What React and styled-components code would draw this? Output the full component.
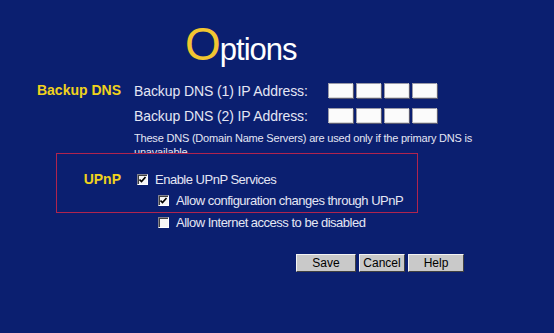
import React from "react";
import styled, { createGlobalStyle } from "styled-components";

const GlobalStyle = createGlobalStyle`
  html, body { margin: 0; padding: 0; background: #0b1f70; }
  body { font-family: "Liberation Sans", Arial, sans-serif; }
`;

const Page = styled.div`
  width: 554px;
  height: 333px;
  background: #0b1f70;
  color: #e4e6f4;
  overflow: hidden;
`;

const Title = styled.h1`
  margin: 0;
  padding: 21px 0 0 185px;
  height: 46px;
  display: flex;
  align-items: baseline;
  font-weight: normal;
  line-height: 46px;
`;

const BigLetter = styled.span`
  font-size: 46px;
  color: #f2c631;
  letter-spacing: -1px;
`;

const Rest = styled.span`
  font-size: 31px;
  line-height: 31px;
  color: #ffffff;
  letter-spacing: -1px;
`;

const Section = styled.section`
  display: grid;
  grid-template-columns: ${(p) => p.$labelWidth}px 1fr;
  column-gap: 13px;
  margin-top: ${(p) => p.$top || 0}px;
`;

const SectionLabel = styled.div`
  text-align: right;
  font-weight: bold;
  font-size: 14px;
  color: #f0d21c;
  line-height: ${(p) => p.$lh}px;
`;

const Rows = styled.div`
  display: flex;
  flex-direction: column;
`;

const IpRow = styled.div`
  display: flex;
  align-items: center;
  height: 25px;
`;

const FieldLabel = styled.span`
  width: 194px;
  font-size: 14px;
  letter-spacing: -0.1px;
`;

const Octets = styled.div`
  display: flex;
  gap: 3px;
`;

const Octet = styled.input`
  box-sizing: border-box;
  width: 25px;
  height: 15px;
  margin: 0;
  padding: 0;
  background: #fbfbfb;
  border: 1px solid;
  border-color: #9a9aa8 #e8e8e8 #d4d4d4 #9a9aa8;
  box-shadow: 1px 1px 0 #5a5a70;
`;

const Note = styled.p`
  margin: 3px 0 0;
  max-width: 340px;
  font-size: 11px;
  line-height: 14px;
  height: 22px;
  overflow: hidden;
  letter-spacing: -0.2px;
`;

const Highlight = styled.div`
  margin-left: 56px;
  width: 362px;
  box-sizing: border-box;
  border: 1px solid #b0244e;
  padding: 15px 0 1px;
`;

const CheckRow = styled.div`
  display: flex;
  align-items: center;
  height: 21px;
  margin-top: ${(p) => p.$top || 0}px;
  padding-left: ${(p) => p.$indent}px;
  font-size: 13px;
  letter-spacing: -0.5px;
`;

const Box = styled.span`
  box-sizing: border-box;
  width: 11px;
  height: 11px;
  margin-right: 7px;
  background: #f6f6f6;
  border: 1px solid;
  border-color: #808090 #ffffff #ffffff #808090;
  box-shadow: inset 1px 1px 0 #404040;
  display: inline-flex;
  align-items: center;
  justify-content: center;
`;

const Buttons = styled.div`
  display: flex;
  gap: 3px;
  margin: 21px 0 0 296px;
`;

const Button = styled.button`
  box-sizing: border-box;
  width: ${(p) => p.$w}px;
  height: 18px;
  margin: 0;
  padding: 0;
  font-family: "Liberation Sans", Arial, sans-serif;
  font-size: 12px;
  color: #000;
  background: #c9c9c9;
  border: 1px solid;
  border-color: #f4f4f4 #404040 #404040 #f4f4f4;
`;

function Checkbox({ checked }) {
  return (
    <Box>
      {checked && (
        <svg width="7" height="7" viewBox="0 0 7 7">
          <path d="M0.5 3.5 L2.5 5.5 L6.5 1" stroke="#000" strokeWidth="1.6" fill="none" />
        </svg>
      )}
    </Box>
  );
}

function IpField({ label }) {
  return (
    <IpRow>
      <FieldLabel>{label}</FieldLabel>
      <Octets>
        <Octet />
        <Octet />
        <Octet />
        <Octet />
      </Octets>
    </IpRow>
  );
}

export default function App() {
  return (
    <Page>
      <GlobalStyle />
      <Title>
        <BigLetter>O</BigLetter>
        <Rest>ptions</Rest>
      </Title>
      <Section $labelWidth={121} $top={11}>
        <SectionLabel $lh={25}>Backup DNS</SectionLabel>
        <Rows>
          <IpField label="Backup DNS (1) IP Address:" />
          <IpField label="Backup DNS (2) IP Address:" />
          <Note>
            These DNS (Domain Name Servers) are used only if the primary DNS is
            unavailable
          </Note>
        </Rows>
      </Section>
      <Highlight>
        <Section $labelWidth={64}>
          <SectionLabel $lh={21}>UPnP</SectionLabel>
          <Rows>
            <CheckRow $indent={3}>
              <Checkbox checked />
              Enable UPnP Services
            </CheckRow>
            <CheckRow $indent={24}>
              <Checkbox checked />
              Allow configuration changes through UPnP
            </CheckRow>
          </Rows>
        </Section>
      </Highlight>
      <Section $labelWidth={121}>
        <span />
        <Rows>
          <CheckRow $indent={24} $top={-1}>
            <Checkbox />
            Allow Internet access to be disabled
          </CheckRow>
        </Rows>
      </Section>
      <Buttons>
        <Button $w={60}>Save</Button>
        <Button $w={46}>Cancel</Button>
        <Button $w={56}>Help</Button>
      </Buttons>
    </Page>
  );
}
